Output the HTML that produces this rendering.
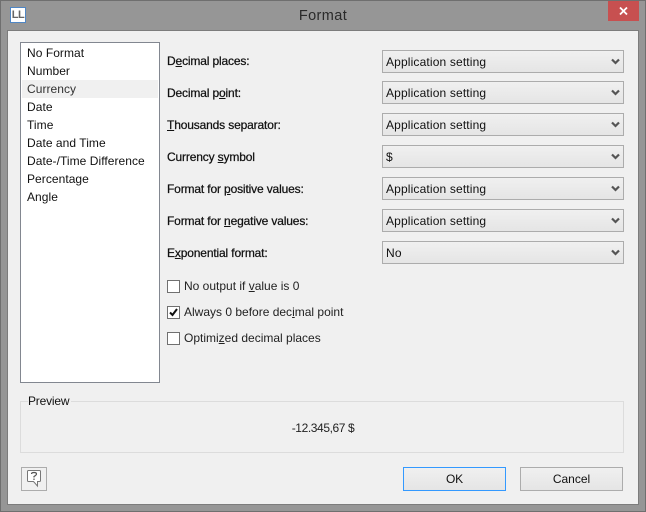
<!DOCTYPE html>
<html><head><meta charset="utf-8">
<style>
html,body{margin:0;padding:0}
body{width:646px;height:512px;overflow:hidden;position:relative;background:#969696;font-family:"Liberation Sans",sans-serif;font-size:12px;color:#111}
div{position:absolute;box-sizing:border-box}
.t{white-space:nowrap;line-height:16px;height:16px}
.l{left:167px;-webkit-text-stroke:.25px #111;letter-spacing:-.15px}
.i{left:27px;letter-spacing:.05px}
.s{left:382px;width:242px;height:23px;border:1px solid #acacac;background:linear-gradient(#f0f0f0,#e5e5e5)}
.s span{position:absolute;left:3px;top:3px;line-height:16px;white-space:nowrap;letter-spacing:.15px}
.s svg{position:absolute;left:228px;top:7px}
.c{left:167px;width:13px;height:13px;border:1px solid #707070;background:#fff}
.b{top:467px;height:24px;background:linear-gradient(#f0f0f0,#e5e5e5);text-align:center;line-height:22px}
.k{left:184px;color:#222}
</style></head>
<body>
<div style="left:0;top:0;width:646px;height:512px;border:1px solid #6f6f6f"></div>
<div style="left:7px;top:30px;width:632px;height:475px;border:1px solid #7c7c7c;background:#f0f0f0"></div>
<div style="left:10px;top:7px;width:16px;height:16px;background:#fff;border:1px solid #4f86c4;color:#666;font-weight:bold;font-size:11px;line-height:14px;text-align:center;letter-spacing:-.5px">LL</div>
<div class="t" style="left:0;width:646px;top:7px;text-align:center;font-size:14.5px;color:#2a2a2a;line-height:18px;height:18px;letter-spacing:.4px">Format</div>
<div style="left:608px;top:1px;width:31px;height:20px;background:#c75050"></div>
<svg style="position:absolute;left:619px;top:6px" width="10" height="10"><path d="M1 1.500L8 8.500M8 1.500L1 8.500" stroke="#fff" stroke-width="1.800" fill="none"/></svg>

<div style="left:20px;top:42px;width:140px;height:341px;border:1px solid #828790;background:#fff"></div>
<div style="left:22px;top:80px;width:136px;height:18px;background:#f0f0f0"></div>
<div class="t i" style="top:45px">No Format</div>
<div class="t i" style="top:63px">Number</div>
<div class="t i" style="top:81px;color:#333">Currency</div>
<div class="t i" style="top:99px">Date</div>
<div class="t i" style="top:117px">Time</div>
<div class="t i" style="top:135px">Date and Time</div>
<div class="t i" style="top:153px">Date-/Time Difference</div>
<div class="t i" style="top:171px">Percentage</div>
<div class="t i" style="top:189px">Angle</div>

<div class="t l" style="top:53px">D<u>e</u>cimal places:</div>
<div class="t l" style="top:85px">Decimal p<u>o</u>int:</div>
<div class="t l" style="top:117px"><u>T</u>housands separator:</div>
<div class="t l" style="top:149px">Currency <u>s</u>ymbol</div>
<div class="t l" style="top:181px">Format for <u>p</u>ositive values:</div>
<div class="t l" style="top:213px">Format for <u>n</u>egative values:</div>
<div class="t l" style="top:245px">E<u>x</u>ponential format:</div>

<div class="s" style="top:50px"><span>Application setting</span><svg width="9" height="8"><path d="M1 1.500L4.500 5L8 1.500" stroke="#555" stroke-width="2.200" fill="none"/></svg></div>
<div class="s" style="top:81px"><span>Application setting</span><svg width="9" height="8"><path d="M1 1.500L4.500 5L8 1.500" stroke="#555" stroke-width="2.200" fill="none"/></svg></div>
<div class="s" style="top:113px"><span>Application setting</span><svg width="9" height="8"><path d="M1 1.500L4.500 5L8 1.500" stroke="#555" stroke-width="2.200" fill="none"/></svg></div>
<div class="s" style="top:145px"><span>$</span><svg width="9" height="8"><path d="M1 1.500L4.500 5L8 1.500" stroke="#555" stroke-width="2.200" fill="none"/></svg></div>
<div class="s" style="top:177px"><span>Application setting</span><svg width="9" height="8"><path d="M1 1.500L4.500 5L8 1.500" stroke="#555" stroke-width="2.200" fill="none"/></svg></div>
<div class="s" style="top:209px"><span>Application setting</span><svg width="9" height="8"><path d="M1 1.500L4.500 5L8 1.500" stroke="#555" stroke-width="2.200" fill="none"/></svg></div>
<div class="s" style="top:241px"><span>No</span><svg width="9" height="8"><path d="M1 1.500L4.500 5L8 1.500" stroke="#555" stroke-width="2.200" fill="none"/></svg></div>

<div class="c" style="top:280px"></div>
<div class="c" style="top:306px"><svg style="position:absolute;left:0;top:0" width="11" height="11"><path d="M2 5.500L4.500 8L9 2" stroke="#111" stroke-width="2" fill="none"/></svg></div>
<div class="c" style="top:332px"></div>
<div class="t k" style="top:278px">No output if <u>v</u>alue is 0</div>
<div class="t k" style="top:304px">Always 0 before dec<u>i</u>mal point</div>
<div class="t k" style="top:330px">Optimi<u>z</u>ed decimal places</div>

<div style="left:20px;top:401px;width:604px;height:52px;border:1px solid #dcdcdc"></div>
<div class="t" style="left:28px;top:393px;background:#f0f0f0;padding-right:2px;letter-spacing:-.2px">Preview</div>
<div class="t" style="left:0;width:646px;top:420px;text-align:center;color:#222;letter-spacing:-.4px">-12.345,67 $</div>

<div class="b" style="left:21px;width:26px;border:1px solid #acacac;background:#f0f0f0"><svg style="position:absolute;left:4px;top:2px" width="16" height="18"><path d="M2.500 .5H13.500Q14.500 .5 14.500 1.500V10.500Q14.500 11.500 13.500 11.500H11.500V16L7.500 11.500H2.500Q1.500 11.500 1.500 10.500V1.500Q1.500 .5 2.500 .5Z" fill="#fff" stroke="#777"/><path d="M5.500 4Q5.500 2.500 8 2.500Q10.500 2.500 10.500 4Q10.500 5 8 6.500V7.500M8 8.500V10" stroke="#555" stroke-width="1.200" fill="none"/></svg></div>
<div class="b" style="left:403px;width:103px;border:1px solid #3399ff;letter-spacing:-.2px">OK</div>
<div class="b" style="left:520px;width:103px;border:1px solid #acacac">Cancel</div>
</body></html>
